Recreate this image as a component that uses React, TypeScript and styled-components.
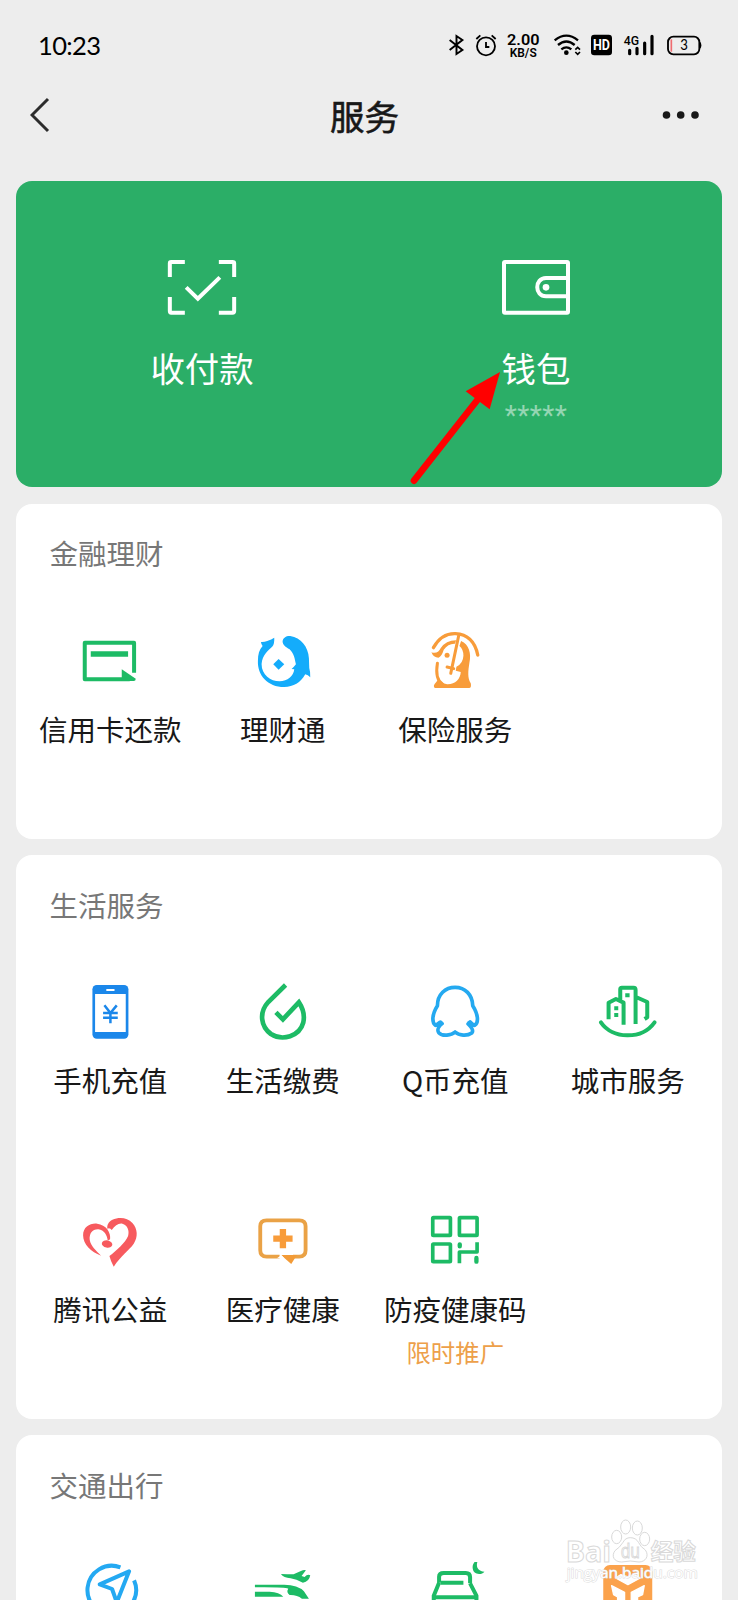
import React from "react";
import styled, { createGlobalStyle } from "styled-components";

const GREEN = "#1dbb65";
const ORANGE = "#f89c3a";
const BLUE = "#14acfb";

const GlobalStyle = createGlobalStyle`
  * { box-sizing: border-box; }
  body {
    margin: 0;
    background: #ededed;
    font-family: "Noto Sans CJK SC", sans-serif;
  }
`;

const Page = styled.div`
  position: relative;
  width: 738px;
  height: 1600px;
  overflow: hidden;
  background: #ededed;
  color: #181818;
`;

const StatusBar = styled.header`
  display: flex;
  align-items: center;
  height: 90px;
  padding: 0 37px 0 38px;
  color: #000;
`;

const Clock = styled.time`
  flex: 1;
  font-family: Lato, sans-serif;
  font-size: 25.5px;
  line-height: 32px;
  letter-spacing: -0.65px;
`;

const StatusItem = styled.svg<{ $gap?: number }>`
  display: block;
  flex: none;
  height: 24px;
  margin-left: ${(p) => p.$gap ?? 0}px;
  overflow: visible;
`;

const NavBar = styled.nav`
  display: flex;
  align-items: center;
  justify-content: space-between;
  height: 90.5px;
  padding: 0 39px 41px 30px;
`;

const NavTitle = styled.h1`
  margin: 0;
  font-size: 34.5px;
  line-height: 48px;
  font-weight: 400;
  -webkit-text-stroke: 0.6px currentColor;
`;

const Stack = styled.main`
  display: flex;
  flex-direction: column;
  gap: 16.5px;
  padding: 0 16px;
`;

const PayCard = styled.section`
  position: relative;
  display: grid;
  grid-template-columns: 372px 296px;
  height: 306.5px;
  border-radius: 16px;
  background: #2bae67;
  color: #fff;
`;

const PayItem = styled.div`
  display: flex;
  flex-direction: column;
  align-items: center;
  padding-top: 76.5px;
`;

const PayLabel = styled.div`
  margin-top: 26px;
  font-size: 34.4px;
  line-height: 48px;
  font-weight: 400;
`;

const Balance = styled.div`
  margin-top: 9px;
  font-family: Roboto, sans-serif;
  font-size: 28px;
  line-height: 32px;
  letter-spacing: 0.4px;
  color: rgba(255, 255, 255, 0.5);
`;

const Arrow = styled.svg`
  position: absolute;
  left: 392px;
  top: 189.5px;
`;

const Card = styled.section<{ $height: number }>`
  height: ${(p) => p.$height}px;
  padding: 29.5px 8px 0;
  border-radius: 16px;
  background: #fff;
`;

const CardTitle = styled.h2`
  margin: 0;
  padding-left: 25.5px;
  font-size: 28.5px;
  line-height: 40px;
  font-weight: 400;
  color: #777;
`;

const Grid = styled.div`
  display: grid;
  grid-template-columns: repeat(4, 1fr);
  grid-auto-rows: 228.5px;
  margin-top: 57.5px;
`;

const Service = styled.div`
  display: flex;
  flex-direction: column;
  align-items: center;
`;

const Glyph = styled.svg`
  display: block;
  flex: none;
  width: 60px;
  height: 60px;
`;

const Label = styled.div`
  margin-top: 18px;
  font-size: 28.5px;
  line-height: 40px;
  white-space: nowrap;
`;

const Promo = styled.div`
  margin-top: 7.5px;
  font-size: 24.4px;
  line-height: 32px;
  color: #eda04a;
`;

const Watermark = styled.svg`
  position: absolute;
  left: 560px;
  top: 1515px;
`;

const icons: Record<string, React.ReactNode> = {
  card: (
    <Glyph viewBox="150.75 63 180 180">
      <path d="M313 188V98H165V208H300" fill="none" stroke={GREEN} strokeWidth="12" strokeLinejoin="round" />
      <path d="M183 132H295" stroke={GREEN} strokeWidth="17" />
      <path d="M276 178L318 206Q318 213 312 213H276Z" fill={GREEN} />
    </Glyph>
  ),
  fish: (
    <Glyph viewBox="668.25 63 180 180" fill={BLUE}>
      <path d="M692 96Q701 97 711 93Q724 88 732 83Q733 100 727 109C716 120 696 134 694 162C694 195 721 214 748 214C772 214 790 198 792 178L784 177Q791 171 797 163C793 145 792 132 778 118C766 111 757 105 757 94C758 83 769 77 780 78C812 83 834 110 836 145L837 174Q841 187 840 202Q833 195 825 193C811 218 790 231 762 231C712 231 681 195 683 152C683 133 687 119 697 108Q693 103 692 96Z" />
      <path d="M745 147L762 163L745 179L729 163Z" />
    </Glyph>
  ),
  insurance: (
    <Glyph viewBox="135.75 63 180 180" fill="none" stroke={ORANGE} strokeLinecap="round">
      <path d="M161 113C178 83 201 70 227 71C263 73 286 96 294 135" strokeWidth="10" />
      <path d="M237 76L213 190" strokeWidth="9" />
      <path d="M173 160C168 190 172 212 188 222" strokeWidth="9" />
      <path d="M229 91L226 101Q205 100 192 119Q186 139 176 143Q161 143 155 127C169 132 179 124 183 114Q198 92 229 91Z" fill={ORANGE} stroke="none" />
      <path d="M244 93C268 104 275 130 269 158C265 184 263 203 273 220Q276 234 268 234H165Q158 228 169 217L177 206Q184 219 202 223C226 224 242 207 243 186L228 182L230 170Q250 160 251 137Q251 118 239 108Z" fill={ORANGE} stroke="none" />
      <path d="M202 171L222 176" strokeWidth="9" />
      <circle cx="202" cy="136" r="7.5" fill={ORANGE} stroke="none" />
    </Glyph>
  ),
  phone: (
    <Glyph viewBox="120.75 51 180 180">
      <rect x="158" y="60" width="108" height="161" rx="13" fill="#1b87ea" />
      <path d="M166 87H258V201H166Z" fill="#fff" />
      <path d="M202 75H222" stroke="#fff" strokeWidth="6" strokeLinecap="round" />
      <path d="M194 121L212 144L231 121M212 144V175M190 144H234M190 158H234" fill="none" stroke="#1b87ea" strokeWidth="7.5" />
    </Glyph>
  ),
  drop: (
    <Glyph viewBox="638.25 51 180 180">
      <path d="M736 60L684 111C655 143 662 185 692 207C727 229 778 214 789 173Q796 142 776 112L728 163L707 142" fill="none" stroke={GREEN} strokeWidth="14" />
    </Glyph>
  ),
  penguin: (
    <Glyph viewBox="135.75 51 180 180">
      <path d="M187 176Q181 171 182 171Q172 179 167 181C156 173 156 149 173 122C173 88 197 67 226 67C256 67 278 89 279 122C296 149 297 173 285 181Q278 180 271 171Q269 172 265 177C276 187 283 196 276 204C262 214 238 212 226 201C215 211 188 215 177 203C171 195 177 184 187 176Z" fill="none" stroke="#24a9f0" strokeWidth="11" strokeLinejoin="round" />
      <path d="M165 184L187 168V179L176 188ZM287 184L264 168V179L276 188Z" fill="#24a9f0" />
    </Glyph>
  ),
  city: (
    <Glyph viewBox="653.25 51 180 180" fill="none" stroke={GREEN} strokeWidth="12">
      <path d="M662 172C696 222 784 226 823 172" strokeLinecap="round" />
      <path d="M685 163V113L707 102L730 113V179M720 107V73Q720 68 725 68H760Q766 68 766 75V177M767 96L801 111V157L793 162" strokeLinejoin="round" />
      <path d="M735 91H748M702 130H714M702 150H714" />
    </Glyph>
  ),
  heart: (
    <Glyph viewBox="120.75 48 180 180" fill="#f75a5e">
      <path d="M184 182C154 171 130 148 130 121C130 96 151 84 172 86C199 89 214 112 211 133L204 137C202 120 193 105 176 103C158 102 148 116 150 135C153 153 169 167 184 182Z" />
      <path d="M203 101C201 90 206 80 218 74C238 65 263 67 278 84C294 102 295 126 282 146C266 168 244 181 222 215Q213 199 209 183C230 167 257 143 265 123C270 107 263 90 248 86C236 84 226 91 216 105Q211 98 203 101Z" />
      <ellipse cx="202" cy="147" rx="16" ry="11" transform="rotate(12 202 147)" />
    </Glyph>
  ),
  medical: (
    <Glyph viewBox="638.25 48 180 180">
      <path d="M718 185H679Q660 185 660 166V94Q660 76 679 76H777Q796 76 796 94V166Q796 185 777 185H758" fill="none" stroke="#eaa246" strokeWidth="11.5" />
      <path d="M722 180H770L753 207Z" fill="#f39b37" />
      <path d="M710 190L724 180L732 190Z" fill="#fff" />
      <path d="M728 102V160M699 131H757" stroke={ORANGE} strokeWidth="19" />
    </Glyph>
  ),
  qr: (
    <Glyph viewBox="165.75 48 180 180" fill="none" stroke={GREEN} strokeWidth="11">
      <rect x="189" y="68" width="53" height="53" rx="2" />
      <rect x="269" y="68" width="53" height="53" rx="2" />
      <rect x="189" y="147" width="53" height="53" rx="2" />
      <path d="M269 205V171H322V142" strokeLinejoin="round" />
      <path d="M270 148V154M320 189V200" strokeWidth="13" strokeLinecap="round" />
    </Glyph>
  ),
  compass: (
    <Glyph viewBox="120.75 339 180 180" fill="none" stroke="#24a9f2" strokeWidth="12">
      <path d="M242 355A73 73 0 1 0 283 394" />
      <path d="M268 367L180 406L217 420L231 460Z" strokeLinejoin="round" />
    </Glyph>
  ),
  flight: (
    <Glyph viewBox="638.25 339 180 180" fill={GREEN}>
      <path d="M722 375Q741 376 760 376L782 366Q791 362 797 364L784 381L793 384Q802 374 810 379Q807 398 788 401Q768 391 751 388Q730 386 722 375Z" />
      <path d="M644 407H728Q772 406 791 427L806 449H785Q770 437 748 438Q737 429 744 419Q733 414 644 415Z" />
      <path d="M644 428H688Q718 430 729 443H644Z" />
      <path d="M644 460H800V472H644Z" />
    </Glyph>
  ),
  bed: (
    <Glyph viewBox="75.75 219 180 180" fill="none" stroke={GREEN} strokeWidth="12">
      <path d="M118 281V263Q118 252 132 252H198Q211 252 211 265V283M118 281L102 320V355M211 283L230 320V355M123 281H191" strokeLinejoin="round" />
      <path d="M97 325H235" />
      <path d="M235 213C218 217 214 238 224 250C233 258 248 256 254 248C232 246 227 231 235 213Z" fill={GREEN} stroke="none" />
    </Glyph>
  ),
  box: (
    <Glyph viewBox="593.25 219 180 180">
      <rect x="609" y="228" width="147" height="155" rx="20" fill="#fba24c" />
      <path d="M646 267L662 257L683 264L704 257L720 267L683 287ZM634 290L673 310V382L652 356V324L640 317ZM732 290L693 310V382L712 356V324L727 317Z" fill="#fff" stroke="#fff" strokeWidth="4" strokeLinejoin="round" />
    </Glyph>
  ),
};

type Entry = { icon: string; name?: string; promo?: string };

const sections: { title: string; height: number; items: Entry[] }[] = [
  {
    title: "金融理财",
    height: 335,
    items: [
      { icon: "card", name: "信用卡还款" },
      { icon: "fish", name: "理财通" },
      { icon: "insurance", name: "保险服务" },
    ],
  },
  {
    title: "生活服务",
    height: 563.5,
    items: [
      { icon: "phone", name: "手机充值" },
      { icon: "drop", name: "生活缴费" },
      { icon: "penguin", name: "Q币充值" },
      { icon: "city", name: "城市服务" },
      { icon: "heart", name: "腾讯公益" },
      { icon: "medical", name: "医疗健康" },
      { icon: "qr", name: "防疫健康码", promo: "限时推广" },
    ],
  },
  {
    title: "交通出行",
    height: 335,
    items: [{ icon: "compass" }, { icon: "flight" }, { icon: "bed" }, { icon: "box" }],
  },
];

function StatusIcons() {
  return (
    <>
      <StatusItem width={15} viewBox="57 39 46 72" preserveAspectRatio="none">
        <path d="M59 60L98 90L80 102V48L98 60L59 90" fill="none" stroke="#000" strokeWidth="6" />
      </StatusItem>
      <StatusItem width={20} $gap={12} viewBox="138 39 60 72" preserveAspectRatio="none">
        <g fill="none" stroke="#000" strokeWidth="5.5">
          <circle cx="168" cy="79" r="27" />
          <path d="M168 66V81H178M139 57L151 46M197 57L185 46" />
        </g>
      </StatusItem>
      <StatusItem width={33} $gap={10.5} viewBox="0 0 33 24" fontFamily="Roboto, sans-serif" fontWeight="600">
        <text x="0" y="11.5" fontSize="15.5" textLength="32.5" lengthAdjust="spacingAndGlyphs">2.00</text>
        <text x="2.7" y="23.8" fontSize="12" textLength="27" lengthAdjust="spacingAndGlyphs">KB/S</text>
      </StatusItem>
      <StatusItem width={27} $gap={14} viewBox="371 39 81 72">
        <g fill="none" stroke="#000" strokeWidth="7">
          <path d="M373 61Q408 33 443 61M383 75Q408 54 433 75M393 88Q408 76 423 88" />
          <path d="M435 89L442 82L449 89M435 96L442 103L449 96" strokeWidth="5" />
        </g>
        <circle cx="408" cy="98" r="7" />
      </StatusItem>
      <StatusItem width={21} $gap={10.5} viewBox="483 39 63 72">
        <rect x="483" y="44" width="63" height="62" rx="10" />
        <text x="489" y="91" fontFamily="Roboto, sans-serif" fontWeight="700" fontSize="43" fill="#fff" textLength="51" lengthAdjust="spacingAndGlyphs">HD</text>
      </StatusItem>
      <StatusItem width={30} $gap={12} viewBox="583 39 90 72">
        <text x="582" y="75" fontFamily="Roboto, sans-serif" fontWeight="500" fontSize="39" textLength="46" lengthAdjust="spacingAndGlyphs">4G</text>
        <path d="M600 91V101M622 85V101M645 69V101M667 49V101" stroke="#000" strokeWidth="9.5" strokeLinecap="round" />
      </StatusItem>
      <StatusItem width={34} $gap={13} viewBox="711 39 102 72">
        <rect x="714" y="50" width="94" height="53" rx="16" fill="none" stroke="#000" strokeWidth="5.5" />
        <path d="M808 65Q814 66 814 76T808 87Z" />
        <path d="M724 58V95" stroke="#ef6c70" strokeWidth="5" />
        <text x="751" y="91" fontFamily="Lato, sans-serif" fontSize="44" textLength="23" lengthAdjust="spacingAndGlyphs">3</text>
      </StatusItem>
    </>
  );
}

export default function App() {
  return (
    <Page>
      <GlobalStyle />
      <StatusBar>
        <Clock>10:23</Clock>
        <StatusIcons />
      </StatusBar>
      <NavBar>
        <svg width="37" height="36" viewBox="0 0 37 36">
          <path d="M18 2L2 18L18 34" fill="none" stroke="#2c2c2c" strokeWidth="3" />
        </svg>
        <NavTitle>服务</NavTitle>
        <svg width="37" height="36" viewBox="0 0 37 36" fill="#181818">
          <circle cx="4.5" cy="18" r="3.8" />
          <circle cx="18.7" cy="18" r="3.8" />
          <circle cx="33" cy="18" r="3.8" />
        </svg>
      </NavBar>
      <Stack>
        <PayCard>
          <PayItem>
            <svg width="70" height="60" viewBox="111.5 51 210 180" fill="none" stroke="#fff" strokeWidth="12">
              <path d="M120 111V70Q120 66 124 66H165M267 66H308Q313 66 313 70V111M313 171V213Q313 218 308 218H267M165 218H124Q120 218 120 213V171M169 142L204 176L270 112" />
            </svg>
            <PayLabel>收付款</PayLabel>
          </PayItem>
          <PayItem>
            <svg width="70" height="60" viewBox="333 51 210 180" fill="none" stroke="#fff" strokeWidth="12">
              <rect x="342" y="66" width="192" height="152" rx="3" />
              <path d="M534 114H468C433 114 433 169 468 169H534" />
              <circle cx="468" cy="142" r="10" fill="#fff" stroke="none" />
            </svg>
            <PayLabel>钱包</PayLabel>
            <Balance>*****</Balance>
          </PayItem>
          <Arrow width="96" height="118" viewBox="54 390 288 354">
            <path d="M72 722L262 480" stroke="#f00" strokeWidth="20" strokeLinecap="round" />
            <path d="M330 396L227 454L299 508Z" fill="#f00" />
          </Arrow>
        </PayCard>
        {sections.map((s) => (
          <Card key={s.title} $height={s.height}>
            <CardTitle>{s.title}</CardTitle>
            <Grid>
              {s.items.map((it) => (
                <Service key={it.icon}>
                  {icons[it.icon]}
                  {it.name && <Label>{it.name}</Label>}
                  {it.promo && <Promo>{it.promo}</Promo>}
                </Service>
              ))}
            </Grid>
          </Card>
        ))}
      </Stack>
      <Watermark width="145" height="80" viewBox="480 75 435 240">
        <g fill="#fff" stroke="#d9d9d9" strokeWidth="3">
          <text x="497" y="215" fontFamily="Open Sans, sans-serif" fontWeight="700" fontSize="88" textLength="136" lengthAdjust="spacingAndGlyphs">Bai</text>
          <ellipse cx="650" cy="141" rx="15" ry="20" />
          <ellipse cx="677" cy="111" rx="15" ry="21" />
          <ellipse cx="712" cy="114" rx="15" ry="21" />
          <ellipse cx="734" cy="147" rx="15" ry="20" />
          <path d="M691 143Q708 143 716 158Q722 171 736 180C749 198 736 216 717 216Q691 210 665 216C642 216 633 198 645 182Q660 172 669 157Q676 143 691 143Z" />
          <text x="662" y="205" fontFamily="Open Sans, sans-serif" fontSize="58" textLength="58" lengthAdjust="spacingAndGlyphs">du</text>
          <text x="752" y="209" fontFamily="Noto Sans CJK SC, sans-serif" fontWeight="700" fontSize="68">经验</text>
        </g>
        <text x="500" y="264" fontFamily="Open Sans, sans-serif" fontSize="41" fill="#fff" stroke="#ddd" strokeWidth="3" paintOrder="stroke" textLength="393" lengthAdjust="spacingAndGlyphs">jingyan.baidu.com</text>
      </Watermark>
    </Page>
  );
}
